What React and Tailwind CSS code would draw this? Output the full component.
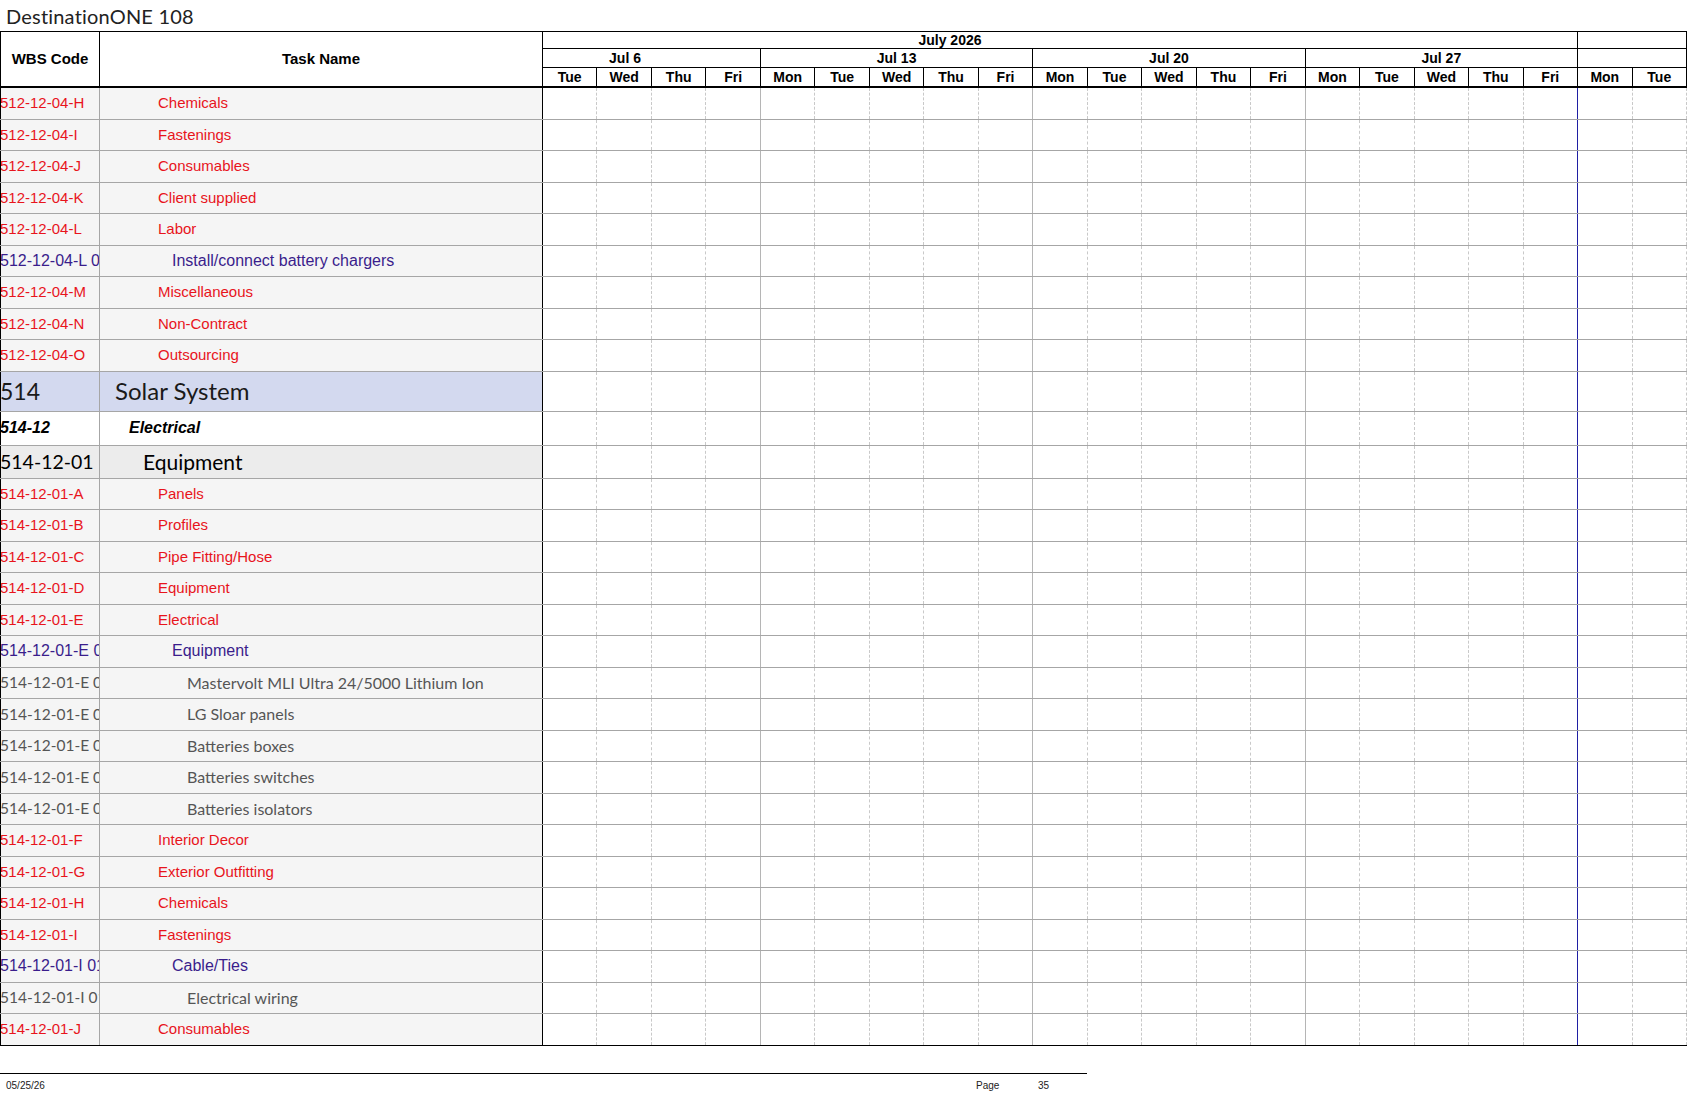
import React from "react";

const rows = [
  ["512-12-04-H", "Chemicals", "red"],
  ["512-12-04-I", "Fastenings", "red"],
  ["512-12-04-J", "Consumables", "red"],
  ["512-12-04-K", "Client supplied", "red"],
  ["512-12-04-L", "Labor", "red"],
  ["512-12-04-L 01", "Install/connect battery chargers", "purple"],
  ["512-12-04-M", "Miscellaneous", "red"],
  ["512-12-04-N", "Non-Contract", "red"],
  ["512-12-04-O", "Outsourcing", "red"],
  ["514", "Solar System", "solar"],
  ["514-12", "Electrical", "elec"],
  ["514-12-01", "Equipment", "equip"],
  ["514-12-01-A", "Panels", "red"],
  ["514-12-01-B", "Profiles", "red"],
  ["514-12-01-C", "Pipe Fitting/Hose", "red"],
  ["514-12-01-D", "Equipment", "red"],
  ["514-12-01-E", "Electrical", "red"],
  ["514-12-01-E 01", "Equipment", "purple"],
  ["514-12-01-E 01 01", "Mastervolt MLI Ultra 24/5000 Lithium Ion", "gray"],
  ["514-12-01-E 01 02", "LG Sloar panels", "gray"],
  ["514-12-01-E 01 03", "Batteries boxes", "gray"],
  ["514-12-01-E 01 04", "Batteries switches", "gray"],
  ["514-12-01-E 01 05", "Batteries isolators", "gray"],
  ["514-12-01-F", "Interior Decor", "red"],
  ["514-12-01-G", "Exterior Outfitting", "red"],
  ["514-12-01-H", "Chemicals", "red"],
  ["514-12-01-I", "Fastenings", "red"],
  ["514-12-01-I 01", "Cable/Ties", "purple"],
  ["514-12-01-I 01 01", "Electrical wiring", "gray"],
  ["514-12-01-J", "Consumables", "red"],
];

const styles = {
  red: {
    h: "h-[31.5px]",
    bg: "bg-[#f5f5f5]",
    code: "text-[15px] text-[#e8141c] font-['Liberation_Sans',Arial,sans-serif]",
    name: "pl-[58px] text-[15px] text-[#e8141c] font-['Liberation_Sans',Arial,sans-serif]",
  },
  purple: {
    h: "h-[31.5px]",
    bg: "bg-[#f5f5f5]",
    code: "text-[16px] text-[#3a1d8c] font-['Liberation_Sans',Arial,sans-serif]",
    name: "pl-[72px] text-[16px] text-[#3a1d8c] font-['Liberation_Sans',Arial,sans-serif]",
  },
  gray: {
    h: "h-[31.5px]",
    bg: "bg-[#f5f5f5]",
    code: "text-[15.5px] text-[#555555] font-['Lato',sans-serif]",
    name: "pl-[87px] text-[16px] text-[#555555] font-['Lato',sans-serif]",
  },
  solar: {
    h: "h-[40px]",
    bg: "bg-[#d3d9ef]",
    code: "text-[23px] text-[#1a1a1a] font-['Lato',sans-serif]",
    name: "pl-[15px] text-[24px] text-[#1a1a1a] font-['Lato',sans-serif]",
  },
  elec: {
    h: "h-[34px]",
    bg: "bg-white",
    code: "text-[16px] text-black font-bold italic font-['Liberation_Sans',Arial,sans-serif]",
    name: "pl-[29px] text-[16px] text-black font-bold italic font-['Liberation_Sans',Arial,sans-serif]",
  },
  equip: {
    h: "h-[33px]",
    bg: "bg-[#ececec]",
    code: "text-[19.5px] text-black font-['Lato',sans-serif]",
    name: "pl-[43px] text-[21px] text-black font-['Lato',sans-serif]",
  },
};

const days = [
  "Tue", "Wed", "Thu", "Fri",
  "Mon", "Tue", "Wed", "Thu", "Fri",
  "Mon", "Tue", "Wed", "Thu", "Fri",
  "Mon", "Tue", "Wed", "Thu", "Fri",
  "Mon", "Tue",
];

function cellBorder(i) {
  if (i === 18) return "border-r border-solid border-r-[#1f1fa3]";
  if (i === 3 || i === 8 || i === 13) return "border-r border-solid border-r-[#b5b5b5]";
  return "border-r border-dashed border-r-[#c9c9c9]";
}

function TimelineCells() {
  return (
    <div className="grid grid-cols-21 flex-1 h-full bg-white">
      {days.map((d, i) => (
        <div key={i} className={"h-full " + cellBorder(i)} />
      ))}
    </div>
  );
}

function Row({ code, name, type, last }) {
  const s = styles[type];
  return (
    <div
      className={
        "flex " +
        s.h +
        " " +
        (last ? "border-b-[1.5px] border-black" : "border-b border-[#a6a6a6]")
      }
    >
      <div
        className={
          "w-[100px] shrink-0 border-l border-l-black border-r border-r-[#a6a6a6] flex items-center overflow-hidden whitespace-nowrap " +
          s.bg
        }
      >
        <span className={"-ml-[1px] " + s.code}>{code}</span>
      </div>
      <div
        className={
          "w-[443px] shrink-0 border-r border-r-black flex items-center overflow-hidden whitespace-nowrap " +
          s.bg
        }
      >
        <span className={s.name}>{name}</span>
      </div>
      <TimelineCells />
    </div>
  );
}

export default function App() {
  return (
    <div className="w-[1687px] h-[1097px] bg-white overflow-hidden font-['Liberation_Sans',Arial,sans-serif] text-black">
      <div className="h-[31px] pl-[6px] flex items-center text-[20px] text-[#222] font-['Lato',sans-serif] tracking-[0.2px]">
        DestinationONE 108
      </div>

      <div className="w-[1687px]">
        {/* Header */}
        <div className="flex h-[57px] border-t border-black border-b-2 border-b-black">
          <div className="w-[100px] shrink-0 border-l border-r border-black flex items-center justify-center text-[15px] font-bold">
            WBS Code
          </div>
          <div className="w-[443px] shrink-0 border-r border-black flex items-center justify-center text-[15px] font-bold">
            Task Name
          </div>
          <div className="flex-1 flex flex-col text-[14px] font-bold leading-none">
            <div className="grid grid-cols-21 h-[17px] border-b border-black">
              <div className="col-span-19 border-r border-black flex items-center">
                <div className="w-[814px] text-center">July 2026</div>
              </div>
              <div className="col-span-2 border-r border-black" />
            </div>
            <div className="grid grid-cols-21 h-[19px] border-b border-black">
              <div className="col-span-4 border-r border-black flex items-center">
                <div className="w-[164px] text-center">Jul 6</div>
              </div>
              <div className="col-span-5 border-r border-black flex items-center justify-center">
                Jul 13
              </div>
              <div className="col-span-5 border-r border-black flex items-center justify-center">
                Jul 20
              </div>
              <div className="col-span-5 border-r border-black flex items-center justify-center">
                Jul 27
              </div>
              <div className="col-span-2 border-r border-black" />
            </div>
            <div className="grid grid-cols-21 flex-1">
              {days.map((d, i) => (
                <div
                  key={i}
                  className="border-r border-black flex items-center justify-center"
                >
                  {d}
                </div>
              ))}
            </div>
          </div>
        </div>

        {/* Body */}
        {rows.map(([code, name, type], i) => (
          <Row
            key={i}
            code={code}
            name={name}
            type={type}
            last={i === rows.length - 1}
          />
        ))}
      </div>

      {/* Footer */}
      <div className="mt-[27px] w-[1087px] border-t border-black">
        <div className="flex pt-[6px] text-[10px] leading-[12px] text-[#222]">
          <span className="pl-[6px] w-[976px]">05/25/26</span>
          <span className="w-[62px]">Page</span>
          <span>35</span>
        </div>
      </div>
    </div>
  );
}
